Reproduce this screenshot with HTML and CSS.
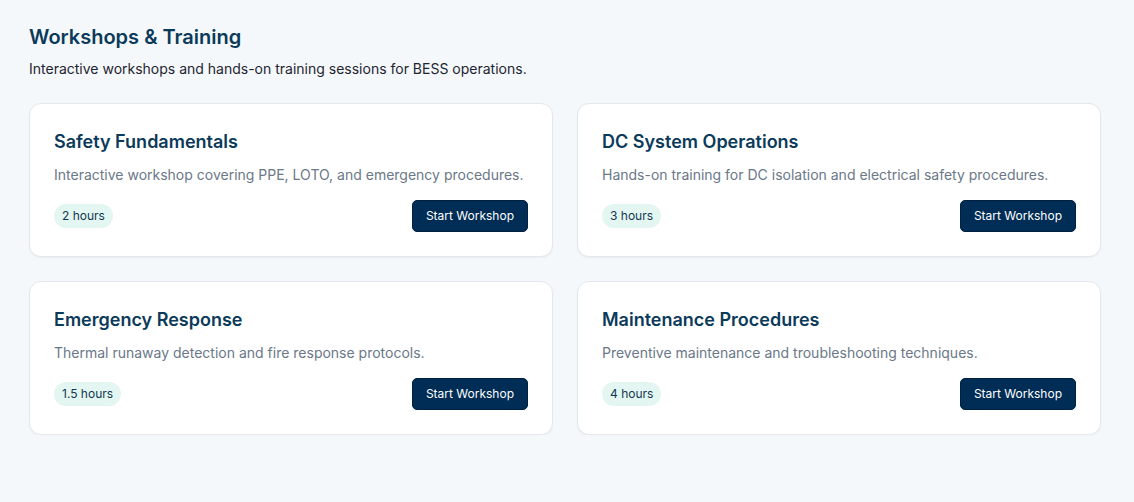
FILE: index.html
```html
<!DOCTYPE html>
<html lang="en">
<head>
<meta charset="utf-8">
<title>Workshops &amp; Training</title>
<link rel="stylesheet" href="styles.css">
</head>
<body>
<main class="page">
  <header class="page-head">
    <h1 class="page-title">Workshops &amp; Training</h1>
    <p class="page-sub">Interactive workshops and hands-on training sessions for BESS operations.</p>
  </header>
  <section class="grid">
    <article class="card">
      <h2 class="card-title">Safety Fundamentals</h2>
      <p class="card-desc">Interactive workshop covering PPE, LOTO, and emergency procedures.</p>
      <div class="card-foot">
        <span class="badge">2 hours</span>
        <button class="btn">Start Workshop</button>
      </div>
    </article>
    <article class="card">
      <h2 class="card-title">DC System Operations</h2>
      <p class="card-desc">Hands-on training for DC isolation and electrical safety procedures.</p>
      <div class="card-foot">
        <span class="badge">3 hours</span>
        <button class="btn">Start Workshop</button>
      </div>
    </article>
    <article class="card">
      <h2 class="card-title">Emergency Response</h2>
      <p class="card-desc">Thermal runaway detection and fire response protocols.</p>
      <div class="card-foot">
        <span class="badge">1.5 hours</span>
        <button class="btn">Start Workshop</button>
      </div>
    </article>
    <article class="card">
      <h2 class="card-title">Maintenance Procedures</h2>
      <p class="card-desc">Preventive maintenance and troubleshooting techniques.</p>
      <div class="card-foot">
        <span class="badge">4 hours</span>
        <button class="btn">Start Workshop</button>
      </div>
    </article>
  </section>
</main>
</body>
</html>
```
FILE: styles.css
```css
* { box-sizing: border-box; }
html, body {
  margin: 0;
  padding: 0;
  background: #f5f8fb;
  font-family: Inter, "Noto Sans", "Liberation Sans", sans-serif;
}
.page {
  padding: 23px 33px 0 29px;
}
.page-head {
  margin-bottom: 24px;
}
.page-title {
  margin: 0;
  font-size: 20px;
  line-height: 28px;
  font-weight: 600;
  color: #0b3a5a;
}
.page-sub {
  margin: 8px 0 0;
  font-size: 14px;
  line-height: 20px;
  color: #1d2530;
}
.grid {
  display: grid;
  grid-template-columns: 1fr 1fr;
  gap: 24px 24px;
}
.card {
  background: #ffffff;
  border: 1px solid #e3e8ee;
  border-radius: 12px;
  box-shadow: 0 1px 2px rgba(15, 40, 70, 0.05);
  padding: 24px 24px 24px;
}
.card-title {
  margin: 0;
  font-size: 18px;
  line-height: 28px;
  font-weight: 600;
  color: #0b3a5a;
}
.card-desc {
  margin: 9px 0 0;
  font-size: 14px;
  line-height: 20px;
  color: #6a7888;
}
.card-foot {
  margin-top: 15px;
  display: flex;
  align-items: center;
  justify-content: space-between;
}
.badge {
  display: inline-block;
  background: #e4f6f1;
  color: #12384f;
  font-size: 12px;
  line-height: 16px;
  padding: 4px 8px;
  border-radius: 999px;
}
.btn {
  font-family: inherit;
  font-size: 12px;
  line-height: 16px;
  color: #ffffff;
  background: #002d55;
  border: 1px solid #00203d;
  border-radius: 5px;
  padding: 7px 13px;
  cursor: pointer;
}
```
